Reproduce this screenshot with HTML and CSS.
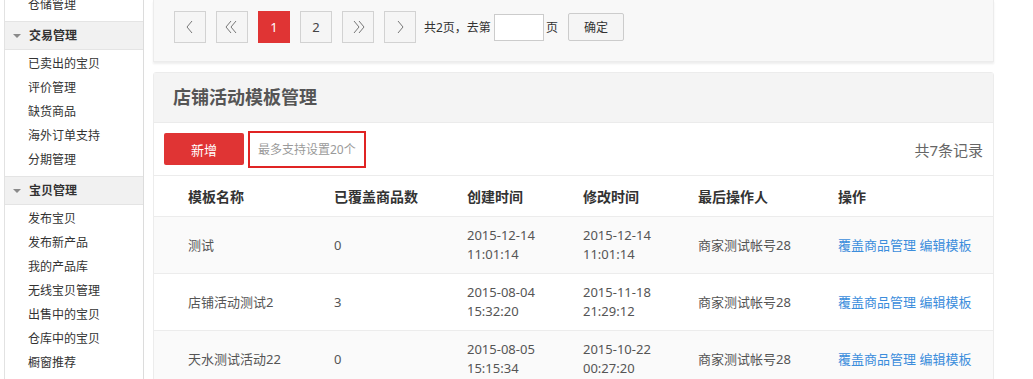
FILE: index.html
```html
<!DOCTYPE html>
<html lang="zh-CN">
<head>
    <meta charset="UTF-8">
    <title>店铺活动模板管理</title>
    <link rel="stylesheet" href="styles.css">
</head>
<body>
    <div class="page">
        <div class="sidebar">
            <ul class="menu">
                <li>仓储管理</li>
            </ul>
            <div class="menu-title"><span class="arrow"></span>交易管理</div>
            <ul class="menu">
                <li>已卖出的宝贝</li>
                <li>评价管理</li>
                <li>缺货商品</li>
                <li>海外订单支持</li>
                <li>分期管理</li>
            </ul>
            <div class="menu-title"><span class="arrow"></span>宝贝管理</div>
            <ul class="menu">
                <li>发布宝贝</li>
                <li>发布新产品</li>
                <li>我的产品库</li>
                <li>无线宝贝管理</li>
                <li>出售中的宝贝</li>
                <li>仓库中的宝贝</li>
                <li>橱窗推荐</li>
            </ul>
        </div>

        <div class="main">
            <div class="card pager-card">
                <div class="pager">
                    <span class="pg-btn">
                        <svg width="10" height="14" viewBox="0 0 10 14"><polyline points="7,1 2,7 7,13" fill="none" stroke="#777" stroke-width="1"/></svg>
                    </span>
                    <span class="pg-btn">
                        <svg width="14" height="14" viewBox="0 0 14 14"><polyline points="6,1 1,7 6,13" fill="none" stroke="#777" stroke-width="1"/><polyline points="11,1 6,7 11,13" fill="none" stroke="#777" stroke-width="1"/></svg>
                    </span>
                    <span class="pg-btn active">1</span>
                    <span class="pg-btn">2</span>
                    <span class="pg-btn">
                        <svg width="14" height="14" viewBox="0 0 14 14"><polyline points="3,1 8,7 3,13" fill="none" stroke="#777" stroke-width="1"/><polyline points="8,1 13,7 8,13" fill="none" stroke="#777" stroke-width="1"/></svg>
                    </span>
                    <span class="pg-btn">
                        <svg width="10" height="14" viewBox="0 0 10 14"><polyline points="3,1 8,7 3,13" fill="none" stroke="#777" stroke-width="1"/></svg>
                    </span>
                    <span class="pg-text">共2页，去第</span>
                    <input class="pg-input" type="text">
                    <span class="pg-text">页</span>
                    <button class="pg-ok">确定</button>
                </div>
            </div>

            <div class="card list-card">
                <div class="card-head">店铺活动模板管理</div>
                <div class="toolbar">
                    <button class="btn-add">新增</button>
                    <span class="tip">最多支持设置20个</span>
                    <span class="total">共7条记录</span>
                </div>
                <table class="tpl-table">
                    <colgroup>
                        <col style="width:180px">
                        <col style="width:133px">
                        <col style="width:116px">
                        <col style="width:115px">
                        <col style="width:140px">
                        <col>
                    </colgroup>
                    <thead>
                        <tr>
                            <th>模板名称</th>
                            <th>已覆盖商品数</th>
                            <th>创建时间</th>
                            <th>修改时间</th>
                            <th>最后操作人</th>
                            <th>操作</th>
                        </tr>
                    </thead>
                    <tbody>
                        <tr>
                            <td>测试</td>
                            <td>0</td>
                            <td>2015-12-14<br>11:01:14</td>
                            <td>2015-12-14<br>11:01:14</td>
                            <td>商家测试帐号28</td>
                            <td><a href="#">覆盖商品管理</a> <a href="#">编辑模板</a></td>
                        </tr>
                        <tr>
                            <td>店铺活动测试2</td>
                            <td>3</td>
                            <td>2015-08-04<br>15:32:20</td>
                            <td>2015-11-18<br>21:29:12</td>
                            <td>商家测试帐号28</td>
                            <td><a href="#">覆盖商品管理</a> <a href="#">编辑模板</a></td>
                        </tr>
                        <tr>
                            <td>天水测试活动22</td>
                            <td>0</td>
                            <td>2015-08-05<br>15:15:34</td>
                            <td>2015-10-22<br>00:27:20</td>
                            <td>商家测试帐号28</td>
                            <td><a href="#">覆盖商品管理</a> <a href="#">编辑模板</a></td>
                        </tr>
                    </tbody>
                </table>
            </div>
        </div>
    </div>
</body>
</html>
```

FILE: styles.css
```css
body {
    margin: 0;
    padding: 0;
    background: #fff;
    font-family: "Noto Sans", "Noto Sans CJK SC", sans-serif;
    font-size: 12px;
    color: #333;
    overflow: hidden;
}

.page {
    display: flex;
    align-items: flex-start;
    padding-left: 4px;
}

/* 左侧菜单 */
.sidebar {
    width: 138px;
    margin-top: -9px;
    height: 400px;
    border-left: 1px solid #e2e2e2;
    border-right: 1px solid #dcdcdc;
    flex: none;
}

.menu {
    list-style: none;
    margin: 0;
    padding: 2px 0 4px;
}

.menu li {
    height: 24px;
    line-height: 24px;
    padding-left: 23px;
    font-size: 12px;
    color: #333;
}

.menu-title {
    height: 27px;
    line-height: 27px;
    background: #f1f1f1;
    border-top: 1px solid #e4e4e4;
    border-bottom: 1px solid #e4e4e4;
    font-size: 12px;
    font-weight: bold;
    color: #333;
    display: flex;
    align-items: center;
}

.arrow {
    width: 0;
    height: 0;
    border-left: 4px solid transparent;
    border-right: 4px solid transparent;
    border-top: 4px solid #8a8a8a;
    margin: 1px 8px 0 8px;
}

/* 右侧内容 */
.main {
    width: 841px;
    margin-left: 9px;
    flex: none;
}

.card {
    background: #fff;
    border: 1px solid #ececec;
}

.pager-card {
    background: #f8f8f8;
    border-top: none;
    box-shadow: 0 2px 2px rgba(0, 0, 0, 0.07);
}

.pager {
    display: flex;
    align-items: center;
    padding: 11px 20px 18px;
    height: 32px;
}

.pg-btn {
    width: 30px;
    height: 30px;
    border: 1px solid #d2d2d2;
    background: #f5f5f5;
    display: flex;
    justify-content: center;
    align-items: center;
    margin-right: 10px;
    font-size: 13px;
    color: #444;
}

.pg-btn.active {
    background: #e03434;
    border-color: #e03434;
    color: #fff;
}

.pg-text {
    font-size: 12px;
    color: #333;
}

.pg-btn + .pg-text {
    margin-left: -2px;
}

.pg-input {
    width: 48px;
    height: 25px;
    border: 1px solid #ccc;
    margin: 0 2px 0 3px;
    padding: 0;
    background: #fff;
}

.pg-ok {
    margin-left: 10px;
    width: 56px;
    height: 28px;
    border: 1px solid #ccc;
    border-radius: 2px;
    background: #f5f5f5;
    font-family: inherit;
    font-size: 12px;
    color: #333;
    padding: 0;
}

.list-card {
    margin-top: 10px;
    border-radius: 3px 3px 0 0;
}

.card-head {
    height: 49px;
    line-height: 49px;
    background: #f4f4f4;
    border-bottom: 1px solid #ebebeb;
    padding-left: 19px;
    font-size: 18px;
    font-weight: bold;
    color: #555;
}

.toolbar {
    display: flex;
    align-items: center;
    height: 52px;
    padding: 0 10px;
    border-bottom: 1px solid #ececec;
}

.btn-add {
    width: 80px;
    height: 32px;
    border: none;
    border-radius: 2px;
    background: #e03434;
    color: #fff;
    font-family: inherit;
    font-size: 13px;
    padding: 0;
}

.tip {
    margin-left: 4px;
    height: 33px;
    line-height: 33px;
    padding: 0 8px;
    border: 2px solid #e02424;
    color: #9a9a9a;
    font-size: 12px;
}

.total {
    margin-left: auto;
    font-size: 15px;
    color: #666;
}

.tpl-table {
    width: 100%;
    border-collapse: collapse;
    table-layout: fixed;
}

.tpl-table th {
    height: 40px;
    text-align: left;
    font-size: 14px;
    font-weight: bold;
    color: #333;
    border-bottom: 1px solid #ececec;
    padding: 0;
}

.tpl-table td {
    height: 56px;
    font-size: 13px;
    line-height: 19px;
    color: #555;
    border-bottom: 1px solid #ececec;
    padding: 0;
    vertical-align: middle;
}

.tpl-table th:first-child,
.tpl-table td:first-child {
    padding-left: 34px;
}

.tpl-table tbody tr:nth-child(odd) {
    background: #fafafa;
}

.tpl-table a {
    color: #3b8ddc;
    text-decoration: none;
}
```
